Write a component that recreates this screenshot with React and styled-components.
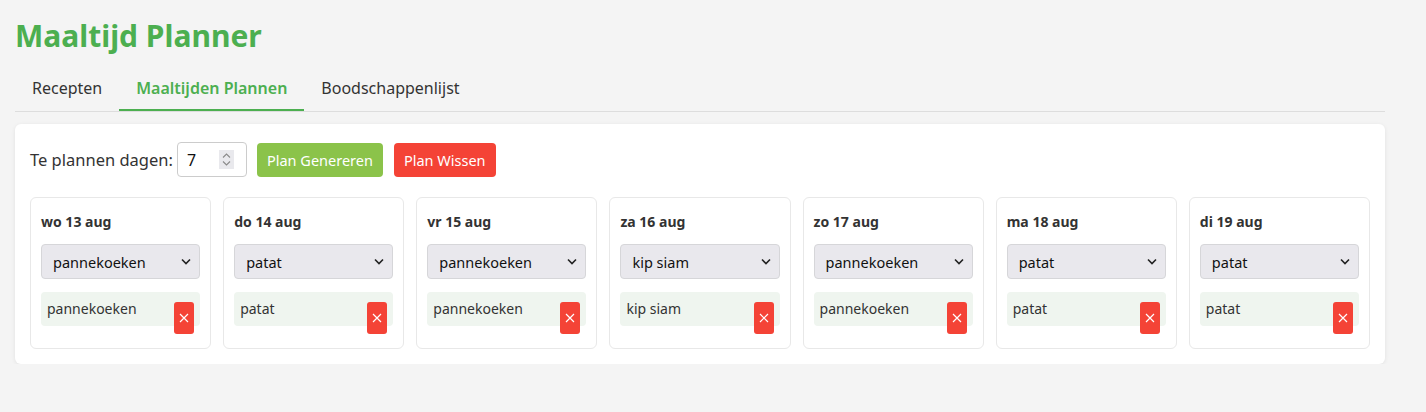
import React from "react";
import styled, { createGlobalStyle } from "styled-components";

const Global = createGlobalStyle`
  html, body { margin: 0; padding: 0; background: #f4f4f4; }
  body { font-family: "Noto Sans", "Open Sans", sans-serif; color: #333; }
  * { box-sizing: border-box; }
`;

const Page = styled.div`
  width: 1400px;
  padding: 0 15px;
`;

const Title = styled.h1`
  margin: 0;
  padding-top: 16px;
  height: 67px;
  font-size: 30px;
  line-height: 40px;
  font-weight: 700;
  color: #4caf50;
`;

const Tabs = styled.div`
  display: flex;
  border-bottom: 1px solid #ddd;
  margin-bottom: 12px;
`;

const Tab = styled.button`
  font-family: inherit;
  font-size: 16px;
  line-height: 22px;
  padding: 10px 17px 10px 17px;
  border: none;
  border-bottom: 2px solid ${(p) => (p.$active ? "#4caf50" : "transparent")};
  background: transparent;
  color: ${(p) => (p.$active ? "#4caf50" : "#333")};
  font-weight: ${(p) => (p.$active ? 600 : 400)};
  cursor: pointer;
`;

const Panel = styled.div`
  background: #fff;
  border-radius: 6px;
  box-shadow: 0 1px 4px rgba(0, 0, 0, 0.08);
  padding: 18px 15px 15px;
`;

const Controls = styled.div`
  display: flex;
  align-items: center;
  height: 35px;
  margin-bottom: 20px;
`;

const Label = styled.label`
  font-size: 16.5px;
  margin-right: 4px;
`;

const NumberBox = styled.div`
  display: flex;
  align-items: center;
  width: 70px;
  height: 35px;
  border: 1px solid #ccc;
  border-radius: 4px;
  padding: 0 12px 0 9px;
  margin-right: 10px;
  background: #fff;
`;

const NumberInput = styled.input`
  flex: 1;
  min-width: 0;
  border: none;
  outline: none;
  font-family: inherit;
  font-size: 16px;
  color: #111;
  padding: 0;
  background: transparent;
`;

const Spinner = styled.span`
  display: flex;
  align-items: center;
  justify-content: center;
  width: 15px;
  height: 19px;
  background: #e9e9ed;
`;

const Button = styled.button`
  font-family: inherit;
  font-size: 14.5px;
  height: 34px;
  padding: 0 10px;
  border: none;
  border-radius: 4px;
  color: #fff;
  background: ${(p) => p.$bg};
  margin-right: 11px;
  cursor: pointer;
`;

const Days = styled.div`
  display: grid;
  grid-template-columns: repeat(7, 1fr);
  gap: 12px;
`;

const Card = styled.div`
  border: 1px solid #e8e8e8;
  border-radius: 6px;
  padding: 10px 10px 22px;
`;

const DayTitle = styled.div`
  font-size: 14px;
  font-weight: 700;
  line-height: 22px;
  margin: 3px 0 11px;
`;

const SelectWrap = styled.div`
  position: relative;
  margin-bottom: 13px;
`;

const Select = styled.select`
  appearance: none;
  -webkit-appearance: none;
  width: 100%;
  height: 35px;
  font-family: inherit;
  font-size: 14.5px;
  color: #111;
  background: #e9e8ed;
  border: 1px solid #d6d6d9;
  border-radius: 4px;
  padding: 0 11px;
  outline: none;
`;

const Chevron = styled.svg`
  position: absolute;
  right: 9px;
  top: 14px;
  pointer-events: none;
`;

const Meal = styled.div`
  display: flex;
  justify-content: space-between;
  align-items: flex-start;
  height: 34px;
  padding: 6px 6px 0 6px;
  background: #eff5ef;
  border-radius: 4px;
  font-size: 14px;
  line-height: 22px;
`;

const Remove = styled.button`
  display: flex;
  align-items: center;
  justify-content: center;
  width: 20px;
  height: 32px;
  margin-top: 4px;
  flex: none;
  padding: 0;
  border: none;
  border-radius: 3px;
  background: #f44336;
  cursor: pointer;
`;

const days = [
  ["wo 13 aug", "pannekoeken"],
  ["do 14 aug", "patat"],
  ["vr 15 aug", "pannekoeken"],
  ["za 16 aug", "kip siam"],
  ["zo 17 aug", "pannekoeken"],
  ["ma 18 aug", "patat"],
  ["di 19 aug", "patat"],
];

const options = ["pannekoeken", "patat", "kip siam"];

export default function App() {
  return (
    <Page>
      <Global />
      <Title>Maaltijd Planner</Title>
      <Tabs>
        <Tab>Recepten</Tab>
        <Tab $active>Maaltijden Plannen</Tab>
        <Tab>Boodschappenlijst</Tab>
      </Tabs>
      <Panel>
        <Controls>
          <Label>Te plannen dagen:</Label>
          <NumberBox>
            <NumberInput defaultValue="7" />
            <Spinner>
              <svg width="9" height="15" viewBox="0 0 9 15">
                <path d="M1 5.5 L4.5 2 L8 5.5" fill="none" stroke="#8a8a8a" strokeWidth="1.1" />
                <path d="M1 9.5 L4.5 13 L8 9.5" fill="none" stroke="#8a8a8a" strokeWidth="1.1" />
              </svg>
            </Spinner>
          </NumberBox>
          <Button $bg="#8bc34a">Plan Genereren</Button>
          <Button $bg="#f44336">Plan Wissen</Button>
        </Controls>
        <Days>
          {days.map(([d, m]) => (
            <Card key={d}>
              <DayTitle>{d}</DayTitle>
              <SelectWrap>
                <Select defaultValue={m}>
                  {options.map((o) => (
                    <option key={o}>{o}</option>
                  ))}
                </Select>
                <Chevron width="10" height="7" viewBox="0 0 10 7">
                  <path d="M1 1.5 L5 5.5 L9 1.5" fill="none" stroke="#222" strokeWidth="1.6" />
                </Chevron>
              </SelectWrap>
              <Meal>
                <span>{m}</span>
                <Remove aria-label="verwijder">
                  <svg width="10" height="10" viewBox="0 0 10 10">
                    <path d="M1 1 L9 9 M9 1 L1 9" stroke="#fff" strokeWidth="1.2" />
                  </svg>
                </Remove>
              </Meal>
            </Card>
          ))}
        </Days>
      </Panel>
    </Page>
  );
}
